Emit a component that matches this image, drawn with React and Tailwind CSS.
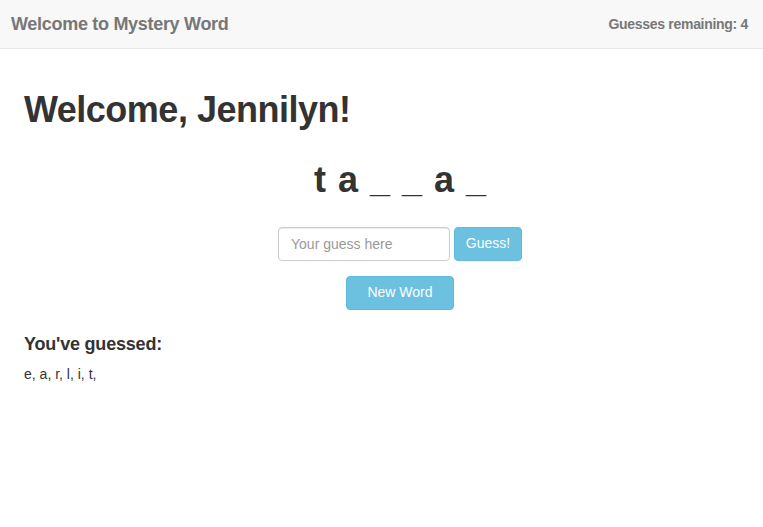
export default function App() {
  const word = ["t", "a", "_", "_", "a", "_"];
  const guessed = ["e", "a", "r", "l", "i", "t"];

  return (
    <div className="min-h-[527px] bg-white text-[#333] font-['Liberation_Sans',Arial,sans-serif]">
      {/* Navbar */}
      <div className="h-[49px] bg-[#f8f8f8] border-b border-[#e7e7e7] flex items-center justify-between pl-[11px] pr-[15px]">
        <span className="text-[18px] text-[#777] font-bold tracking-[-0.3px]">Welcome to Mystery Word</span>
        <span className="text-[14px] text-[#777] font-bold tracking-[-0.3px]">Guesses remaining: 4</span>
      </div>

      <div className="px-6">
        <h1 className="text-[36px] font-bold mt-[41px] leading-[1.1] tracking-[-0.5px]">Welcome, Jennilyn!</h1>

        <div className="pl-[37px] flex justify-center mt-[32px]">
          <div className="flex gap-[12px] text-[36px] font-bold leading-none">
            {word.map((ch, i) => (
              <span key={i}>{ch}</span>
            ))}
          </div>
        </div>

        <div className="pl-[37px] flex justify-center mt-[29px]">
          <input
            placeholder="Your guess here"
            className="w-[172px] h-[34px] px-3 text-[14px] border border-[#ccc] rounded-[4px] outline-none placeholder-[#999] shadow-[inset_0_1px_1px_rgba(0,0,0,0.075)]"
          />
          <button className="ml-[4px] w-[68px] h-[34px] text-[14px] text-white bg-[#6bc1df] border border-[#5ebadb] rounded-[4px]">
            Guess!
          </button>
        </div>

        <div className="pl-[37px] flex justify-center mt-[15px]">
          <button className="w-[108px] h-[34px] text-[14px] text-white bg-[#6bc1df] border border-[#5ebadb] rounded-[4px]">
            New Word
          </button>
        </div>

        <h4 className="text-[18px] font-bold mt-[25px] leading-[1.1] tracking-[-0.2px]">You've guessed:</h4>
        <p className="text-[14px] mt-[10px]">
          {guessed.map((g, i) => (
            <span key={i}>{g}, </span>
          ))}
        </p>
      </div>
    </div>
  );
}
